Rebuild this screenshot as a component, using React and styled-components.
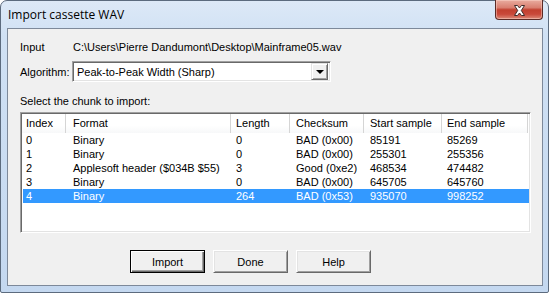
import styled, { createGlobalStyle } from 'styled-components';

const GlobalStyle = createGlobalStyle`
  html, body { margin: 0; padding: 0; background: #ffffff; }
  * { box-sizing: border-box; }
`;

const dialogFont = `"Liberation Sans", Arial, sans-serif`;

// Window frame
const Window = styled.div`
  width: 549px;
  height: 293px;
  border: 1px solid #5c6b7e;
  border-radius: 7px 7px 2px 2px;
  background: linear-gradient(180deg, #dde9f7 0%, #d0e1f4 12%, #c4d8f0 100%);
  padding: 0 5px 6px 6px;
  display: flex;
  flex-direction: column;
  font-family: ${dialogFont};
  font-size: 11px;
  color: #000;
`;

const TitleBar = styled.div`
  height: 27px;
  display: flex;
  justify-content: space-between;
  align-items: flex-start;
`;

const Title = styled.div`
  font-family: "Open Sans", "Liberation Sans", sans-serif;
  font-size: 12px;
  line-height: 16px;
  padding: 6px 0 0 1px;
  color: #000;
`;

const CloseButton = styled.div`
  width: 48px;
  height: 20px;
  margin-top: -1px;
  border: 1px solid #5b2b26;
  border-top: none;
  border-radius: 0 0 4px 4px;
  background: linear-gradient(180deg, #e9ac9f 0%, #d97f70 40%, #c2402f 52%, #c9493a 75%, #dc8a78 100%);
  box-shadow: inset 0 0 0 1px rgba(255, 220, 210, 0.45);
  display: flex;
  align-items: center;
  justify-content: center;
  padding-top: 1px;
`;

// Client area
const Client = styled.div`
  height: 258px;
  border: 1px solid #7d899a;
  background: #f0f0f0;
  padding: 11px 11px 0 12px;
  display: flex;
  flex-direction: column;
`;

const FieldRow = styled.div`
  display: flex;
  align-items: center;
  height: ${({ h }) => h}px;
  margin-top: ${({ mt }) => mt || 0}px;
`;

const Label = styled.span`
  width: ${({ w }) => w}px;
  flex: none;
  line-height: 14px;
  white-space: nowrap;
`;

const Text = styled.span`
  line-height: 14px;
  white-space: nowrap;
`;

// Combobox
const Combo = styled.div`
  width: 259px;
  height: 21px;
  background: #fff;
  border-top: 1px solid #a0a0a0;
  border-left: 1px solid #a0a0a0;
  border-right: 1px solid #ffffff;
  border-bottom: 1px solid #ffffff;
  box-shadow: inset 1px 1px 0 #696969, inset -1px -1px 0 #e3e3e3;
  display: flex;
  align-items: center;
  padding: 1px 2px 1px 4px;
`;

const ComboValue = styled.span`
  flex: 1;
  line-height: 14px;
  white-space: nowrap;
`;

const ComboArrow = styled.div`
  width: 17px;
  height: 17px;
  background: #f0f0f0;
  border-top: 1px solid #e3e3e3;
  border-left: 1px solid #e3e3e3;
  border-right: 1px solid #696969;
  border-bottom: 1px solid #696969;
  box-shadow: inset 1px 1px 0 #ffffff, inset -1px -1px 0 #a0a0a0;
  display: flex;
  align-items: center;
  justify-content: center;

  &::after {
    content: '';
    border-left: 4px solid transparent;
    border-right: 4px solid transparent;
    border-top: 4px solid #000;
    margin-top: 1px;
  }
`;

// List view
const ListView = styled.div`
  width: 511px;
  height: 121px;
  margin-top: 4px;
  background: #fff;
  border-top: 1px solid #a0a0a0;
  border-left: 1px solid #a0a0a0;
  border-right: 1px solid #ffffff;
  border-bottom: 1px solid #ffffff;
  box-shadow: inset 1px 1px 0 #696969, inset -1px -1px 0 #e3e3e3;
  padding: 1px 1px 1px 1px;
  overflow: hidden;
`;

const cols = '44px 165px 59px 74px 78px 86px';

const HeaderRow = styled.div`
  display: grid;
  grid-template-columns: ${cols};
  height: 19px;
`;

const HeaderCell = styled.div`
  border-right: 1px solid #d5d5d5;
  padding-left: ${({ pad }) => pad}px;
  line-height: 19px;
  white-space: nowrap;
  background: linear-gradient(180deg, #ffffff 0%, #ffffff 60%, #f7f8f9 100%);
`;

const Rows = styled.div`
  margin-top: 0px;
`;

const Row = styled.div`
  display: grid;
  grid-template-columns: ${cols} 1fr;
  height: 14px;
  margin-left: 1px;
  background: ${({ selected }) => (selected ? '#3399ff' : 'transparent')};
  color: ${({ selected }) => (selected ? '#ffffff' : '#000000')};
`;

const Cell = styled.div`
  padding-left: ${({ pad }) => pad}px;
  line-height: 14px;
  white-space: nowrap;
  overflow: hidden;
`;

// Buttons
const ButtonRow = styled.div`
  display: flex;
  gap: 8px;
  margin-top: 17px;
  padding-left: 110px;
`;

const Button = styled.div`
  width: 75px;
  height: 23px;
  background: #f0f0f0;
  border-top: 1px solid ${({ primary }) => (primary ? '#000' : '#ffffff')};
  border-left: 1px solid ${({ primary }) => (primary ? '#000' : '#ffffff')};
  border-right: 1px solid ${({ primary }) => (primary ? '#000' : '#696969')};
  border-bottom: 1px solid ${({ primary }) => (primary ? '#000' : '#696969')};
  box-shadow: ${({ primary }) =>
    primary
      ? 'inset 1px 1px 0 #ffffff, inset -1px -1px 0 #696969, inset -2px -2px 0 #a0a0a0'
      : 'inset 1px 1px 0 #e3e3e3, inset -1px -1px 0 #a0a0a0'};
  display: flex;
  align-items: center;
  justify-content: center;
  line-height: 14px;
`;

const columns = [
  { title: 'Index', pad: 4 },
  { title: 'Format', pad: 7 },
  { title: 'Length', pad: 5 },
  { title: 'Checksum', pad: 6 },
  { title: 'Start sample', pad: 6 },
  { title: 'End sample', pad: 5 },
];

const chunks = [
  ['0', 'Binary', '0', 'BAD (0x00)', '85191', '85269'],
  ['1', 'Binary', '0', 'BAD (0x00)', '255301', '255356'],
  ['2', 'Applesoft header ($034B $55)', '3', 'Good (0xe2)', '468534', '474482'],
  ['3', 'Binary', '0', 'BAD (0x00)', '645705', '645760'],
  ['4', 'Binary', '264', 'BAD (0x53)', '935070', '998252'],
];

const CloseGlyph = () => (
  <svg width="13" height="11" viewBox="0 0 13 11">
    <path
      d="M1.5 0.5 H4.5 L6.5 3 L8.5 0.5 H11.5 L8.3 5.5 L11.5 10.5 H8.5 L6.5 8 L4.5 10.5 H1.5 L4.7 5.5 Z"
      fill="#ffffff"
      stroke="#3d2b29"
      strokeWidth="1"
      strokeLinejoin="round"
    />
  </svg>
);

export default function App() {
  return (
    <>
      <GlobalStyle />
      <Window>
        <TitleBar>
          <Title>Import cassette WAV</Title>
          <CloseButton>
            <CloseGlyph />
          </CloseButton>
        </TitleBar>
        <Client>
          <FieldRow h={14}>
            <Label w={53}>Input</Label>
            <Text>C:\Users\Pierre Dandumont\Desktop\Mainframe05.wav</Text>
          </FieldRow>
          <FieldRow h={21} mt={7}>
            <Label w={52}>Algorithm:</Label>
            <Combo>
              <ComboValue>Peak-to-Peak Width (Sharp)</ComboValue>
              <ComboArrow />
            </Combo>
          </FieldRow>
          <FieldRow h={14} mt={12}>
            <Text>Select the chunk to import:</Text>
          </FieldRow>
          <ListView>
            <HeaderRow>
              {columns.map((c) => (
                <HeaderCell key={c.title} pad={c.pad}>{c.title}</HeaderCell>
              ))}
            </HeaderRow>
            <Rows>
              {chunks.map((row, i) => (
                <Row key={row[0]} selected={i === 4}>
                  {row.map((v, j) => (
                    <Cell key={j} pad={columns[j].pad - (j === 0 ? 1 : 1)}>{v}</Cell>
                  ))}
                  <Cell pad={0} />
                </Row>
              ))}
            </Rows>
          </ListView>
          <ButtonRow>
            <Button primary>Import</Button>
            <Button>Done</Button>
            <Button>Help</Button>
          </ButtonRow>
        </Client>
      </Window>
    </>
  );
}
